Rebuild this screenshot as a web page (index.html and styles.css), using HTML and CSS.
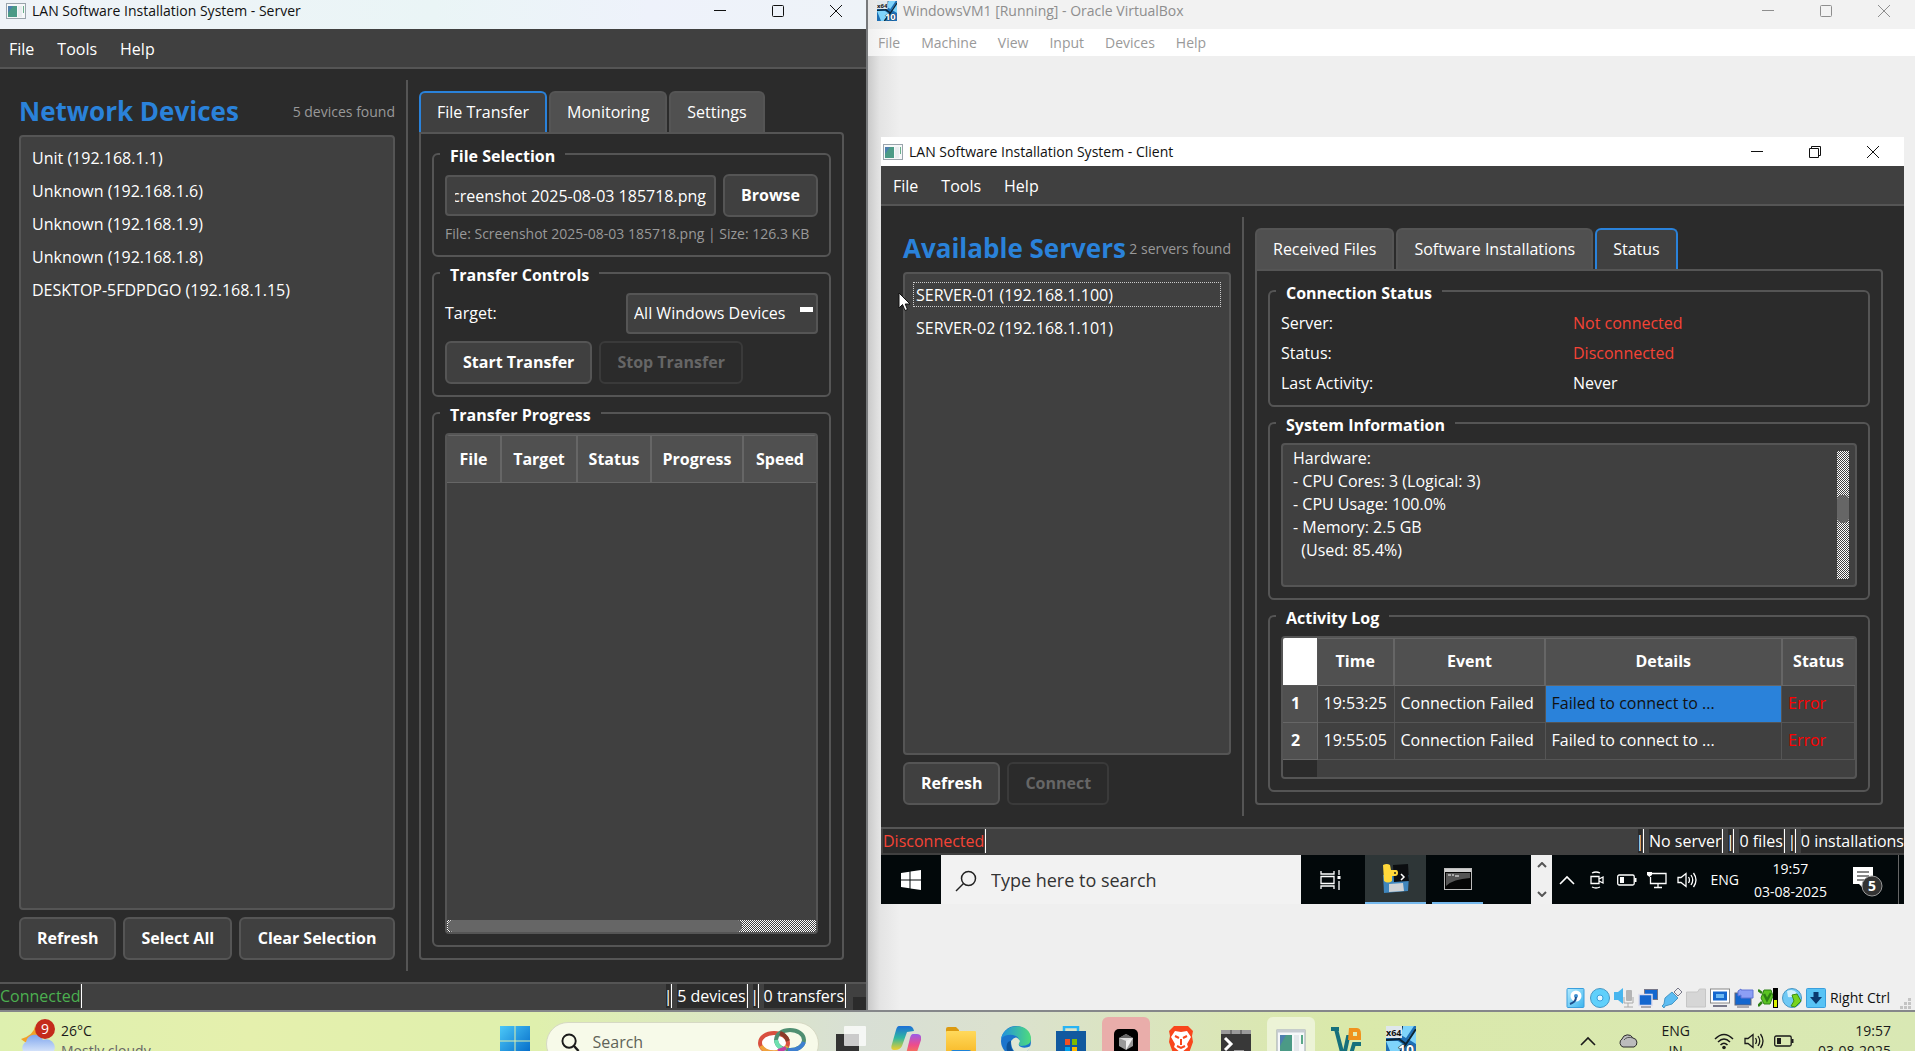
FILE: index.html
```html
<!DOCTYPE html>
<html lang="en">
<head>
<meta charset="utf-8">
<title>LAN Software Installation System</title>
<link rel="stylesheet" href="styles.css">
</head>
<body>
<svg class="defs" aria-hidden="true">
  <defs>
    <linearGradient id="gWin" x1="0" y1="0" x2="1" y2="1"><stop offset="0" stop-color="#4cc8f8"/><stop offset="1" stop-color="#0067c6"/></linearGradient>
    <linearGradient id="gCloud" x1="0" y1="0" x2="0" y2="1"><stop offset="0" stop-color="#7fa6ee"/><stop offset="1" stop-color="#e6effc"/></linearGradient>
    <linearGradient id="gEdge" x1="0" y1="0" x2="1" y2="0"><stop offset="0" stop-color="#1f8fe0"/><stop offset="1" stop-color="#4fdc7c"/></linearGradient>
    <linearGradient id="gFold" x1="0" y1="0" x2="0" y2="1"><stop offset="0" stop-color="#ffd95c"/><stop offset="1" stop-color="#f7b521"/></linearGradient>
    <linearGradient id="gCopA" x1="0" y1="0" x2="0" y2="1"><stop offset="0" stop-color="#1d6fd8"/><stop offset=".5" stop-color="#2fb7a0"/><stop offset="1" stop-color="#f2cf2c"/></linearGradient>
    <linearGradient id="gCopB" x1="0" y1="0" x2="0" y2="1"><stop offset="0" stop-color="#9a5be8"/><stop offset=".5" stop-color="#ee4c8b"/><stop offset="1" stop-color="#f98a3c"/></linearGradient>
    <linearGradient id="gBlue" x1="0" y1="0" x2="1" y2="1"><stop offset="0" stop-color="#b6ecff"/><stop offset="1" stop-color="#3ab4ee"/></linearGradient>
    <symbol id="app" viewBox="0 0 20 16"><rect x=".5" y=".5" width="19" height="15" fill="#f6f8f9" stroke="#9aa4ac"/><rect x="2" y="3" width="9" height="11" fill="#4b9a86"/><path d="M2 3h5l-5 7z" fill="#4d7fae"/><rect x="12" y="3" width="4" height="11" fill="#e9edf0"/><rect x="17" y="3" width="1" height="7" fill="#6ab08c"/></symbol>
    <symbol id="min" viewBox="0 0 14 14"><path d="M1 6.500h12" stroke="currentColor"/></symbol>
    <symbol id="max" viewBox="0 0 14 14"><rect x="1.500" y="1.500" width="11" height="11" rx="1" fill="none" stroke="currentColor"/></symbol>
    <symbol id="restore" viewBox="0 0 14 14"><path d="M1.500 3.500h9v9h-9zM3.500 3.500v-2h9v9h-2" fill="none" stroke="currentColor"/></symbol>
    <symbol id="close" viewBox="0 0 14 14"><path d="M1 1l12 12M13 1L1 13" stroke="currentColor"/></symbol>
    <symbol id="vm" viewBox="0 0 30 30"><rect width="30" height="30" fill="#1e6fb4"/><path d="M17 0h11L20 12 15 9zM22 13l8-11v16zM0 15h12l6 4-6 11H6z" fill="#7fd4fb"/><path d="M16 0l-3 13L0 14M13 13l7 5 10-15M20 18l-9 12" stroke="#0c2434" stroke-width="2" fill="none"/><rect width="16" height="12" fill="#dfe7ec"/><text x="0" y="10" font-size="9" font-weight="700" font-family="Open Sans, sans-serif" fill="#111">x64</text><text x="12" y="29" font-size="14" font-weight="700" font-family="Open Sans, sans-serif" fill="#fff" stroke="#123" stroke-width="1" paint-order="stroke">10</text></symbol>
    <symbol id="speaker" viewBox="0 0 20 20"><path d="M1 7.500h3l5-4v13l-5-4H1zM11.500 7q2 3 0 6M14 5q3.500 5 0 10M16.500 3q5 7 0 14" fill="none" stroke="currentColor" stroke-width="1.300"/></symbol>
    <symbol id="battery" viewBox="0 0 20 20"><rect x=".7" y="5" width="16.500" height="10" rx="1.500" fill="none" stroke="currentColor" stroke-width="1.300"/><path d="M18.500 8v4" stroke="currentColor" stroke-width="2"/><rect x="3" y="7" width="4" height="6" fill="currentColor"/></symbol>
    <symbol id="caret" viewBox="0 0 20 20"><path d="M3 14l7-7 7 7" fill="none" stroke="currentColor" stroke-width="1.600"/></symbol>
    <symbol id="lens" viewBox="0 0 20 20"><circle cx="8.500" cy="8.500" r="7" fill="none" stroke="currentColor" stroke-width="2"/><path d="M13.500 13.500l5 5.500" stroke="currentColor" stroke-width="2.500"/></symbol>
  </defs>
</svg>

<main class="desktop">
  <section class="window server" aria-label="Server">
    <header class="titlebar titlebar-server">
      <svg class="app-icon"><use href="#app"/></svg>
      <span class="window-title">LAN Software Installation System - Server</span>
      <span class="controls"><button aria-label="Minimize"><svg><use href="#min"/></svg></button><button aria-label="Maximize"><svg><use href="#max"/></svg></button><button aria-label="Close"><svg><use href="#close"/></svg></button></span>
    </header>
    <nav class="menubar"><button>File</button><button>Tools</button><button>Help</button></nav>
    <div class="body body-server">
      <div class="side side-server">
        <div class="side-head"><h1>Network Devices</h1><span class="note">5 devices found</span></div>
        <ul class="list">
          <li>Unit (192.168.1.1)</li>
          <li>Unknown (192.168.1.6)</li>
          <li>Unknown (192.168.1.9)</li>
          <li>Unknown (192.168.1.8)</li>
          <li>DESKTOP-5FDPDGO (192.168.1.15)</li>
        </ul>
        <div class="actions"><button class="btn">Refresh</button><button class="btn">Select All</button><button class="btn btn-grow">Clear Selection</button></div>
      </div>
      <div class="splitter"></div>
      <div class="content">
        <div class="tabs" role="tablist"><button class="tab tab-on" role="tab">File Transfer</button><button class="tab" role="tab">Monitoring</button><button class="tab" role="tab">Settings</button></div>
        <div class="pane">
          <fieldset class="group">
            <legend>File Selection</legend>
            <div class="group-body">
              <div class="row"><input class="field path" aria-label="File path" dir="rtl" value="Screenshot 2025-08-03 185718.png"><button class="btn">Browse</button></div>
              <p class="note info">File: Screenshot 2025-08-03 185718.png | Size: 126.3 KB</p>
            </div>
          </fieldset>
          <fieldset class="group">
            <legend>Transfer Controls</legend>
            <div class="group-body">
              <div class="row spread"><label for="target">Target:</label><span class="combo"><select class="field" id="target"><option>All Windows Devices</option></select></span></div>
              <div class="row"><button class="btn">Start Transfer</button><button class="btn" disabled>Stop Transfer</button></div>
            </div>
          </fieldset>
          <fieldset class="group group-grow">
            <legend>Transfer Progress</legend>
            <div class="group-body">
              <div class="table-box">
                <table class="grid">
                  <colgroup><col class="w-file"><col class="w-target"><col class="w-status"><col><col class="w-speed"></colgroup>
                  <thead><tr><th>File</th><th>Target</th><th>Status</th><th>Progress</th><th>Speed</th></tr></thead>
                </table>
                <div class="hscroll"><div class="hthumb"></div></div>
              </div>
            </div>
          </fieldset>
        </div>
      </div>
    </div>
    <footer class="statusbar">
      <span class="cell ok">Connected</span>
      <span class="cell bar push">|</span><span class="cell">5 devices</span><span class="cell bar">|</span><span class="cell">0 transfers</span>
      <span class="grip"></span>
    </footer>
  </section>

  <section class="window vbox" aria-label="VirtualBox">
    <header class="titlebar titlebar-vbox">
      <svg class="vm-icon"><use href="#vm"/></svg>
      <span class="window-title">WindowsVM1 [Running] - Oracle VirtualBox</span>
      <span class="controls"><button aria-label="Minimize"><svg><use href="#min"/></svg></button><button aria-label="Maximize"><svg><use href="#max"/></svg></button><button aria-label="Close"><svg><use href="#close"/></svg></button></span>
    </header>
    <nav class="vm-menu"><button>File</button><button>Machine</button><button>View</button><button>Input</button><button>Devices</button><button>Help</button></nav>
    <div class="screen">
      <div class="guest">
        <header class="titlebar titlebar-client">
          <svg class="app-icon"><use href="#app"/></svg>
          <span class="window-title">LAN Software Installation System - Client</span>
          <span class="controls"><button aria-label="Minimize"><svg><use href="#min"/></svg></button><button aria-label="Restore"><svg><use href="#restore"/></svg></button><button aria-label="Close"><svg><use href="#close"/></svg></button></span>
        </header>
        <nav class="menubar menubar-client"><button>File</button><button>Tools</button><button>Help</button></nav>
        <div class="body body-client">
          <div class="side side-client">
            <div class="side-head"><h1>Available Servers</h1><span class="note">2 servers found</span></div>
            <ul class="list">
              <li class="focused">SERVER-01 (192.168.1.100)</li>
              <li>SERVER-02 (192.168.1.101)</li>
            </ul>
            <div class="actions"><button class="btn">Refresh</button><button class="btn" disabled>Connect</button></div>
            <svg class="cursor" viewBox="0 0 13 20"><path d="M1 1v15l3.500-3.500L7 18.500l2.500-1L7.200 12H12z" fill="#fff" stroke="#111"/></svg>
          </div>
          <div class="splitter"></div>
          <div class="content content-client">
            <div class="tabs" role="tablist"><button class="tab" role="tab">Received Files</button><button class="tab" role="tab">Software Installations</button><button class="tab tab-on" role="tab">Status</button></div>
            <div class="pane">
              <fieldset class="group">
                <legend>Connection Status</legend>
                <dl class="group-body facts">
                  <dt>Server:</dt><dd class="bad">Not connected</dd>
                  <dt>Status:</dt><dd class="bad">Disconnected</dd>
                  <dt>Last Activity:</dt><dd>Never</dd>
                </dl>
              </fieldset>
              <fieldset class="group group-grow">
                <legend>System Information</legend>
                <div class="group-body">
                  <div class="info-box">
                    <textarea readonly aria-label="System Information">Hardware:
- CPU Cores: 3 (Logical: 3)
- CPU Usage: 100.0%
- Memory: 2.5 GB
  (Used: 85.4%)</textarea>
                    <div class="vscroll"><div class="vthumb"></div></div>
                  </div>
                </div>
              </fieldset>
              <fieldset class="group group-grow">
                <legend>Activity Log</legend>
                <div class="group-body">
                  <div class="table-box">
                    <table class="grid log">
                      <colgroup><col class="w-num"><col class="w-time"><col class="w-event"><col><col class="w-speed"></colgroup>
                      <thead><tr><td class="corner"></td><th>Time</th><th>Event</th><th>Details</th><th>Status</th></tr></thead>
                      <tbody>
                        <tr><th>1</th><td>19:53:25</td><td>Connection Failed</td><td class="selected">Failed to connect to ...</td><td class="error">Error</td></tr>
                        <tr><th>2</th><td>19:55:05</td><td>Connection Failed</td><td>Failed to connect to ...</td><td class="error">Error</td></tr>
                      </tbody>
                    </table>
                    <div class="num-rest"></div>
                  </div>
                </div>
              </fieldset>
            </div>
          </div>
        </div>
        <footer class="statusbar statusbar-client">
          <span class="cell lost">Disconnected</span>
          <span class="cell bar push">|</span><span class="cell">No server</span><span class="cell bar">|</span><span class="cell">0 files</span><span class="cell bar">|</span><span class="cell cell-last">0 installations</span>
        </footer>
        <div class="guest-bar">
          <button class="g-start" aria-label="Start"><svg viewBox="0 0 20 20"><path d="M0 3l8.500-1.200V9.500H0zM9.500 1.600L20 0v9.500H9.500zM0 10.500h8.500v7.700L0 17zM9.500 10.500H20V20L9.500 18.400z" fill="#fff"/></svg></button>
          <label class="g-search"><svg viewBox="0 0 22 22"><circle cx="13.500" cy="8.500" r="7" fill="none" stroke="#222" stroke-width="1.500"/><path d="M8.500 13.500L1 21" stroke="#222" stroke-width="1.500"/></svg><input aria-label="Search" placeholder="Type here to search"></label>
          <button class="g-view" aria-label="Task view"><svg viewBox="0 0 22 20"><path d="M1 1v3h13V1M1 19v-3h13v3M1 6.500h13v7H1zM19 0v5M19 11v9" fill="none" stroke="#fff" stroke-width="1.300"/><rect x="17.500" y="6" width="3" height="3" fill="#fff"/></svg></button>
          <button class="g-task g-task-on" aria-label="Python"><svg viewBox="0 0 28 30"><path d="M1 11h26l-1 16-24 2z" fill="#3f86bd"/><path d="M11 1l15-1 1 17-15 1z" fill="#0b0d10"/><path d="M7 20l14-1 1 8-15 1z" fill="#cfd2d4"/><path d="M1 1q4-2 7 0l1 5h5q2 0 2 3t-3 3h-3v5q-4 3-8 0z" fill="#ffd83a"/><circle cx="13" cy="9" r="1" fill="#222"/><path d="M19 10l3 3-3 3" stroke="#fff" stroke-width="1.500" fill="none"/></svg></button>
          <button class="g-task g-task-under" aria-label="Command Prompt"><svg viewBox="0 0 28 30"><rect x=".5" y="4.500" width="27" height="21" fill="#050505" stroke="#bbb"/><path d="M1 5h26v3H1z" fill="#d0d0d0"/><path d="M2 9h24v5Q9 15 2 22z" fill="#555"/><path d="M4 11h3m1 0h2m1 1h4" stroke="#fff"/></svg></button>
          <span class="g-scroll"><svg viewBox="0 0 10 6"><path d="M1 5l4-4 4 4" fill="none" stroke="#555" stroke-width="2"/></svg><svg viewBox="0 0 10 6"><path d="M1 1l4 4 4-4" fill="none" stroke="#555" stroke-width="2"/></svg></span>
          <div class="g-tray">
            <svg><use href="#caret"/></svg>
            <svg viewBox="0 0 20 20"><path d="M4 6.500h8v7H4zM12 9l4-2v6l-4-2M5 3q4-2 8 0M5 17q4 2 8 0" fill="none" stroke="#fff" stroke-width="1.300"/></svg>
            <svg><use href="#battery"/></svg>
            <svg viewBox="0 0 20 20"><path d="M5 3.500h14v10H3.500V7M11 14v3M7 17.500h8" fill="none" stroke="#fff" stroke-width="1.300"/><path d="M0 2h5v3L2.500 7 0 5z" fill="#fff"/></svg>
            <svg><use href="#speaker"/></svg>
            <span class="g-lang">ENG</span>
            <span class="g-clock"><span>19:57</span><span>03-08-2025</span></span>
            <svg class="g-note" viewBox="0 0 30 30"><path d="M0 0h20v17H10v4l-4-4H0z" fill="#fff"/><path d="M4 5h12M4 9h12M4 13h9" stroke="#111"/><circle cx="19" cy="19" r="10" fill="#333" stroke="#999"/><text x="19" y="24" text-anchor="middle" font-size="14" font-weight="700" font-family="Open Sans, sans-serif" fill="#fff">5</text></svg>
            <span class="g-edge"></span>
          </div>
        </div>
      </div>
    </div>
    <footer class="vm-status">
      <svg viewBox="0 0 20 20"><rect x="1" y=".5" width="17" height="19" rx="1" fill="url(#gBlue)" stroke="#3a9fdd"/><circle cx="10" cy="8" r="5.500" fill="#fff"/><circle cx="10" cy="8" r="2" fill="#3f8fd0"/><path d="M10 9q0 5-6 7" stroke="#1d4f8c" stroke-width="2" fill="none"/></svg>
      <svg viewBox="0 0 20 20"><circle cx="10" cy="10" r="9.500" fill="#5fd0fb" stroke="#4797c4"/><circle cx="10" cy="10" r="3" fill="#e6f8ff" stroke="#3a9fdd"/></svg>
      <svg viewBox="0 0 20 20"><path d="M0 4h4l5-4v16l-5-4H0z" fill="#49b6ee"/><rect x="12" y="2" width="6" height="11" rx="1" fill="#b5b5b5"/><path d="M10 9v6h9V9M14 15v4M10 19h9" stroke="#aaa" fill="none"/></svg>
      <svg viewBox="0 0 20 20"><rect x="6.500" y="1.500" width="13" height="10" fill="#1467cf" stroke="#778"/><rect x="1" y="6.500" width="13" height="11" fill="#1467cf" stroke="#dde" stroke-width="1.500"/><path d="M3 19h10" stroke="#667"/></svg>
      <svg viewBox="0 0 20 20"><path d="M12 4l4-4 4 4-4 4z" fill="#eee" stroke="#778"/><path d="M10 4l6 6-6 6-7 2-1 2-2-2 2-2 1-6z" fill="#5cbdf3" stroke="#4797c4"/></svg>
      <svg viewBox="0 0 20 20"><path d="M.5 4h11l2-3h6v18H.5z" fill="#d6d6d6" stroke="#c6c6c6"/></svg>
      <svg viewBox="0 0 20 20"><rect x=".5" y="1" width="19" height="14" fill="#fff" stroke="#888"/><rect x="3" y="3.500" width="14" height="9" fill="#1467cf"/><rect x="6" y="6" width="8" height="4" fill="#6db8f2"/><path d="M3 18h14" stroke="#778" stroke-width="2"/></svg>
      <svg viewBox="0 0 20 20"><rect x="1" y="5" width="16" height="12" fill="#1467cf" stroke="#667"/><path d="M3 19h12" stroke="#667"/><path d="M4 3l3-2v1h12v8H7v-3L4 8z" fill="#8c9ff5" stroke="#6175d6"/></svg>
      <svg viewBox="0 0 20 20"><path d="M6 2h7l2 6-3 8H6L3 10z" fill="#5bc423" stroke="#2d8114"/><path d="M0 2l4 3M0 18l4-4M6 6l3 6 4-7" stroke="#2d8114" stroke-width="2.500" fill="none"/><rect x="15" width="5" height="20" fill="#000"/><rect x="16" y="12" width="3" height="7" fill="#d8f000"/></svg>
      <svg viewBox="0 0 20 20"><circle cx="10" cy="10" r="9.500" fill="#6fc9f5" stroke="#4797c4"/><path d="M5 3q6-3 10 2-5 5-9 4z" fill="#d4f1fd"/><path d="M10 7l5-1 4 7-6 6-4-1 3-5z" fill="#77d41f" stroke="#3d8f14"/></svg>
      <svg viewBox="0 0 20 20"><rect x=".5" y=".5" width="19" height="19" rx="1" fill="#58c3f5" stroke="#3a9fdd"/><path d="M7.500 4h5v5H16l-6 7-6-7h3.500z" fill="#0b3a70"/></svg>
      <span>Right Ctrl</span>
      <svg class="resize" viewBox="0 0 12 12"><path d="M8 0h3v3H8zM4 4h3v3H4zM8 4h3v3H8zM0 8h3v3H0zM4 8h3v3H4zM8 8h3v3H8z" fill="#c4c4c4"/></svg>
    </footer>
  </section>
</main>

<footer class="taskbar">
  <div class="weather">
    <svg viewBox="0 0 34 36"><path d="M14 7q-1 9-14 13 8 8 20 1z" fill="#f2a229"/><path d="M7 36a7 7 0 0 1-2-13 9 9 0 0 1 17-2 8 8 0 0 1 7 15z" fill="url(#gCloud)"/><circle cx="24" cy="10" r="10" fill="#c42b1c"/><text x="24" y="15" text-anchor="middle" font-size="14" font-family="Open Sans, sans-serif" fill="#fff">9</text></svg>
    <p><span>26°C</span><span class="dim">Mostly cloudy</span></p>
  </div>
  <div class="apps">
    <button aria-label="Start"><svg viewBox="0 0 30 30"><path d="M0 0h14.500v14.500H0zM15.500 0H30v14.500H15.500zM0 15.500h14.500V30H0zM15.500 15.500H30V30H15.500z" fill="url(#gWin)"/></svg></button>
    <label class="search"><svg class="search-lens"><use href="#lens"/></svg><input aria-label="Search" placeholder="Search"><svg class="rings" viewBox="0 0 48 30"><ellipse cx="16" cy="16" rx="14" ry="10" fill="#fff" stroke="#d9503f" stroke-width="4"/><path d="M3 19a14 10 0 0 0 26 0" fill="none" stroke="#f0a23c" stroke-width="4"/><ellipse cx="32" cy="13" rx="14" ry="10" fill="none" stroke="#4f8f72" stroke-width="4"/><path d="M18 13q1 8 10 10" fill="none" stroke="#6fe0b0" stroke-width="4"/><path d="M30 23q12 1 16-8" fill="none" stroke="#3d7fd0" stroke-width="4"/><path d="M20 24l8-3" stroke="#c23fa0" stroke-width="4"/><path d="M22 6q6 2 8 8" fill="none" stroke="#8a3a2a" stroke-width="4"/></svg></label>
    <button aria-label="Task view"><svg viewBox="0 0 30 30"><rect y="8" width="23" height="23" fill="#333"/><rect x="8" width="22" height="20" rx="1" fill="#fff" fill-opacity=".75"/></svg></button>
    <button aria-label="Copilot"><svg viewBox="0 0 30 30"><path d="M8 0h10q4 0 5 5l-7 1-5 14q-2 4-7 4H3q-4 0-2-6L5 4q1-4 3-4z" fill="url(#gCopA)"/><path d="M22 8h4q5 0 4 6l-4 12q-1 4-5 4H11q4-1 5-6l3-12q1-4 3-4z" fill="url(#gCopB)"/></svg></button>
    <button aria-label="File Explorer"><svg viewBox="0 0 30 30"><path d="M0 3q0-2 2-2h8l3 3v6H0z" fill="#dc9a10"/><rect y="5" width="30" height="26" rx="1" fill="url(#gFold)"/><path d="M5 30v-4q0-2 2-2h16q2 0 2 2v4z" fill="#1c82d8"/></svg></button>
    <button aria-label="Edge"><svg viewBox="0 0 30 30"><circle cx="15" cy="15" r="15" fill="#1b74cc"/><path d="M0 13C3-4 30-4 30 13q0 7-10 7-4-1-2-5 0-5-6-6Q4 8 0 13z" fill="url(#gEdge)"/><path d="M10 15q5-7 9 0-3 5 1 6 4 2 10-1-7 12-15 7-5-4-5-12z" fill="#dfe7d4"/><path d="M10 15q-2 9 8 15-15 0-12-12 1-3 4-3z" fill="#0d5298"/></svg></button>
    <button aria-label="Microsoft Store"><svg viewBox="0 0 30 30"><path d="M8 5V1h14v4" fill="none" stroke="#28b4f4" stroke-width="2.500"/><path d="M0 5h30v25H0z" fill="#11599f"/><path d="M9 13h5v6H9z" fill="#f25022"/><path d="M16 13h5v6h-5z" fill="#7fba00"/><path d="M9 21h5v6H9z" fill="#00a4ef"/><path d="M16 21h5v6h-5z" fill="#ffb900"/></svg></button>
    <button class="alert" aria-label="Cursor"><svg viewBox="0 0 30 30"><rect x="3" y="3" width="24" height="28" rx="5" fill="#000"/><path d="M15 8l7 4v8l-7 4-7-4v-8z" fill="#999"/><path d="M15 14l7-2-7 12z" fill="#eee"/><path d="M8 12h14l-7 3z" fill="#ddd"/><path d="M15 8l7 4H8z" fill="#666"/></svg></button>
    <button aria-label="Brave"><svg viewBox="0 0 30 30"><path d="M8 0h14l5 5-1 5 1 6-4 11-8 5-8-5-4-11 1-6-1-5z" fill="#f9461c"/><path d="M9 5l6 1 6-1 4 6-4 7 1 3-7 6-7-6 1-3-4-7z" fill="#fff"/><path d="M9 10l4 2M21 10l-4 2M15 13v6M11 20l4 2 4-2" stroke="#f9461c" stroke-width="2" fill="none"/></svg></button>
    <button aria-label="Terminal"><svg viewBox="0 0 30 30"><rect y="4" width="30" height="28" fill="#383838"/><path d="M0 4h30v4H0z" fill="#9a9a9a"/><path d="M10 4v4M20 4v4" stroke="#444"/><path d="M4 12l6 6-6 6" stroke="#fff" stroke-width="3" fill="none"/><path d="M13 26h10" stroke="#fff" stroke-width="3"/></svg></button>
    <button class="active" aria-label="LAN Software Installation System"><svg viewBox="0 0 30 30"><rect x="1" y="4" width="28" height="30" fill="#f6f8f9" stroke="#9aa4ac"/><path d="M1 5h28" stroke="#c6ccd2" stroke-width="3"/><rect x="4" y="9" width="12" height="19" fill="#4b9a86"/><path d="M4 9h6L4 20z" fill="#4d7fae"/><rect x="18" y="9" width="5" height="19" fill="#e4e8eb"/><path d="M26 9v9" stroke="#5aa888" stroke-width="2"/></svg></button>
    <button aria-label="VirtualBox Manager"><svg viewBox="0 0 30 30"><path d="M0 3h8M5 3l7 27M23 11h-6l-4 19" fill="none" stroke="#15707c" stroke-width="4"/><path d="M18 2h8q4 0 4 6v6H17z" fill="#f0921e"/><path d="M22 6h4v4h-4z" fill="#e2ebb4"/><path d="M30 18h-7l-3 10h10" fill="none" stroke="#15707c" stroke-width="4"/></svg></button>
    <button aria-label="WindowsVM1"><svg><use href="#vm"/></svg></button>
  </div>
  <div class="tray">
    <svg><use href="#caret"/></svg>
    <svg class="cloud" viewBox="0 0 20 20"><path d="M5 16a4.500 4.500 0 0 1-1-8 6 6 0 0 1 11-1 4.700 4.700 0 0 1 1 9z" fill="#bcbcbc" stroke="#2c2c2c"/><path d="M6 9q3-4 9-2" stroke="#555" fill="none"/></svg>
    <span class="stack lang"><span>ENG</span><span>IN</span></span>
    <svg class="wifi" viewBox="0 0 20 20"><path d="M1 8q9-9 18 0M4 11q6-6 12 0M6.500 14q3.500-3.500 7 0" fill="none" stroke="#1a1a1a" stroke-width="1.500"/><circle cx="10" cy="16.500" r="1.800" fill="#1a1a1a"/></svg>
    <svg><use href="#speaker"/></svg>
    <svg><use href="#battery"/></svg>
    <span class="stack clock"><span>19:57</span><span>03-08-2025</span></span>
  </div>
</footer>
</body>
</html>
```
FILE: styles.css
```css
* { box-sizing: border-box; }

body {
  margin: 0;
  height: 100vh;
  display: grid;
  grid-template-rows: minmax(0, 1fr) 39px;
  overflow: hidden;
  background: #efefef;
  color: #fff;
  font: 16px/23px "Open Sans", "Noto Sans", sans-serif;
}

button, input, select, textarea {
  margin: 0;
  padding: 0;
  border: 0;
  background: none;
  color: inherit;
  font: inherit;
}

svg { display: block; flex: none; }
.defs { position: absolute; width: 0; height: 0; }
p, h1, ul, dl, dd { margin: 0; padding: 0; }
ul { list-style: none; }

/* Windows side by side */
.desktop {
  display: grid;
  grid-template-columns: minmax(0, 868fr) minmax(0, 1047fr);
  border-bottom: 2px solid #85878a;
}
.window { display: flex; flex-direction: column; min-width: 0; min-height: 0; }
.server { border-right: 2px solid #77797b; background: #2b2b2b; }
.vbox {
  background: linear-gradient(90deg, #cacaca, #e4e4e4 12px, #efefef 32px);
  color: #999;
  font-size: 14px;
}

/* Title bars */
.titlebar { display: flex; align-items: center; flex: none; height: 29px; color: #111; font-size: 14px; }
.titlebar-server { padding: 0 1px 8px 6px; background: linear-gradient(90deg, #eff3f8, #eaf5f6 50%, #eef2fb 75%, #eef3f8); }
.titlebar-vbox { padding: 0 2px 8px 9px; background: linear-gradient(90deg, #e6e6e6, #f2f2f2 32px); color: #8e8e8e; }
.titlebar-client { padding: 0 2px 0 2px; background: #fff; }
.window-title { margin-left: 6px; white-space: nowrap; }
.app-icon { width: 20px; height: 16px; }
.vm-icon { width: 20px; height: 20px; }
.controls { display: flex; margin-left: auto; }
.controls button { width: 58px; display: grid; place-items: center; }
.controls svg { width: 14px; height: 14px; }

/* Menu bars */
.menubar { display: flex; flex: none; gap: 23px; height: 40px; padding: 2px 9px 0; background: #404040; border-bottom: 2px solid #555; }
.menubar-client { padding: 2px 12px 0; }
.vm-menu { display: flex; flex: none; gap: 21px; height: 27px; padding: 0 10px; background: linear-gradient(90deg, #f0f0f0, #fff 32px); }

/* Application body */
.body { flex: 1; min-height: 0; display: grid; padding: 11px 0; background: #2b2b2b; }
.body-server { grid-template-columns: minmax(0, 406fr) 2px minmax(0, 458fr); }
.body-client { grid-template-columns: minmax(0, 361fr) 2px minmax(0, 660fr); }
.splitter { background: #555; }
.side { display: flex; flex-direction: column; min-height: 0; padding: 11px 11px 11px 19px; }
.side-client { position: relative; padding-left: 22px; }
.side-head { display: flex; align-items: center; justify-content: space-between; height: 40px; margin-bottom: 4px; white-space: nowrap; }
h1 { color: #2a82da; font-size: 26px; line-height: 40px; }
.note { color: #999; font-size: 14px; }
.list { flex: 1; min-height: 0; padding: 8px; border: 2px solid #555; border-radius: 4px; background: #404040; }
.list li { height: 25px; margin-bottom: 8px; padding: 0 3px; line-height: 27px; }
.list .focused { outline: 1px dotted #ccc; outline-offset: -1px; }
.actions, .row { display: flex; gap: 7px; }
.actions { margin-top: 7px; }
.spread { align-items: center; justify-content: space-between; }
.btn { height: 43px; padding: 0 16px; border: 2px solid #555; border-radius: 6px; background: #404040; font-weight: 700; white-space: nowrap; }
.btn-grow { flex: 1; }
.btn:disabled { border-color: #3a3a3a; background: #2b2b2b; color: #666; }
.cursor { position: absolute; left: 17px; top: 75px; width: 13px; height: 20px; }

/* Tabs */
.content { display: flex; flex-direction: column; min-height: 0; padding: 11px 22px 11px 11px; }
.content-client { padding-right: 21px; }
.tabs { display: flex; gap: 2px; }
.tab { height: 41px; padding: 0 16px; border: 2px solid #555; border-bottom: 0; border-radius: 6px 6px 0 0; background: #505050; white-space: nowrap; }
.tab-on { border-color: #2a82da; background: #404040; }
.pane { flex: 1; min-height: 0; display: flex; flex-direction: column; gap: 3px; padding: 7px 11px 11px; border: 2px solid #555; border-radius: 0 4px 4px 4px; }

/* Group boxes */
.group { display: flex; flex-direction: column; min-width: 0; min-height: 0; margin: 0; padding: 0; border: 2px solid #555; border-radius: 6px; }
.group-grow { flex: 1 1 0; }
legend { height: 26px; margin-left: 6px; padding: 4px 10px 0; line-height: 22px; font-weight: 700; }
.group-body { flex: 1; min-height: 0; display: flex; flex-direction: column; gap: 7px; padding: 7px 11px 11px; }
.row .field { align-self: center; }
.field { height: 41px; padding: 0 8px; border: 2px solid #555; border-radius: 4px; background: #404040; }
.path { flex: 1; min-width: 0; }
.info { line-height: 20px; white-space: nowrap; }
.combo { position: relative; }
.combo .field { display: block; width: 192px; padding: 0 6px; appearance: none; }
.combo::after { content: ""; position: absolute; right: 5px; top: 14px; width: 13px; height: 5px; background: #fff; }
.facts { display: grid; grid-template-columns: 292fr 284fr; gap: 7px 0; line-height: 25px; grid-auto-rows: 23px; }
.bad { color: #f44336; }

/* Tables */
.table-box { flex: 1; min-height: 0; display: flex; flex-direction: column; border: 2px solid #555; border-radius: 4px; background: #404040; overflow: hidden; }
.grid { width: 100%; table-layout: fixed; border-collapse: collapse; white-space: nowrap; }
.grid th { height: 47px; padding: 0; border: 1px solid #666; border-left: 0; border-right-width: 2px; background: #505050; }
.grid th:last-child { border-right: 0; }
.grid td { padding: 0 0 0 6px; border-right: 1px solid #555; border-bottom: 1px solid #555; }
.grid.log tbody th { height: 37px; padding-left: 8px; border-right-width: 1px; border-right-style: solid; text-align: left; }
.log .corner { background: #fff; }
.log .selected { background: #2a82da; color: #111; }
.log .error { color: #f00; }
.num-rest { width: 34px; flex: 1; background: #2b2b2b; }
.w-file { width: 54px; }
.w-target { width: 76px; }
.w-status { width: 74px; }
.w-speed { width: 73px; }
.w-num { width: 34px; }
.w-time { width: 77px; }
.w-event { width: 151px; }

/* Scroll bars with a dithered track */
.hscroll, .vscroll { background: repeating-conic-gradient(#fff 0 25%, #404040 0 50%) 0 0 / 2px 2px; }
.hscroll { height: 12px; margin-top: auto; padding-left: 1px; }
.hthumb { width: 80%; height: 12px; border-radius: 5px; background: #666; }
.info-box { flex: 1; min-height: 0; display: flex; padding: 6px; border: 2px solid #555; border-radius: 4px; background: #404040; }
.info-box textarea { flex: 1; resize: none; overflow: hidden; padding: 0 4px; outline: 0; margin-top: -4px; }
.vscroll { width: 12px; }
.vthumb { height: 22%; margin-top: 44px; border-radius: 5px; background: #666; }

/* Status bars */
.statusbar { display: flex; flex: none; height: 28px; border-top: 2px solid #555; background: #404040; white-space: nowrap; overflow: hidden; line-height: 25px; color: #fff; }
.statusbar-client { padding-left: 2px; }
.cell { height: 24px; margin-right: 5px; border-right: 1px solid #fff; background: #2b2b2b; background-clip: content-box; padding-right: 1px; }
.bar { display: flex; justify-content: center; width: 6px; }
.push { margin-left: auto; }
.cell-last { margin-right: 0; border: 0; padding: 0; }
.ok { color: #4caf50; }
.lost { color: #f44336; }
.grip { align-self: flex-end; width: 13px; height: 13px; margin-left: 2px; background: #2b2b2b; }

/* Virtual machine screen */
.screen { flex: 1; min-height: 0; padding: 81px 11px 81px 13px; }
.guest { height: 100%; display: flex; flex-direction: column; color: #fff; font-size: 16px; }
.guest-bar { display: flex; flex: none; height: 49px; background: #02080a; }
.g-start { width: 60px; display: grid; place-items: center; }
.g-start svg { width: 20px; height: 20px; }
.g-search { width: 360px; display: flex; align-items: center; gap: 14px; padding: 2px 14px 0; background: #f2f2f2; }
.g-search svg { width: 22px; height: 22px; }
.g-search input { flex: 1; min-width: 0; color: #222; font-size: 18px; }
.g-search input::placeholder { color: #333; opacity: 1; }
.g-view { width: 64px; padding-right: 4px; display: grid; place-items: center; }
.g-view svg { width: 22px; height: 20px; }
.g-task { width: 61px; display: grid; place-items: center; border-bottom: 2px solid transparent; }
.g-task svg { width: 28px; height: 30px; }
.g-task-on { background: #2e3637; border-bottom-color: #76b9ed; }
.g-task-under { width: 51px; margin-left: 6px; border-bottom-color: #76b9ed; }
.g-scroll { width: 21px; margin-left: auto; display: flex; flex-direction: column; justify-content: space-between; align-items: center; padding: 7px 0; background: #f0f0f0; }
.g-scroll svg { width: 10px; height: 6px; }
.g-tray { display: flex; align-items: center; gap: 10px; padding: 0 5px; }
.g-tray svg { width: 20px; height: 20px; }
.g-lang { margin-left: 3px; font-size: 14px; }
.g-clock { display: flex; flex-direction: column; align-items: center; margin-left: 5px; font-size: 14px; line-height: 23px; }
.g-tray .g-note { width: 30px; height: 30px; margin: 4px 0 0 16px; }
.g-edge { width: 1px; height: 49px; background: #666; margin-left: 5px; }

.vm-status { display: flex; flex: none; align-items: center; justify-content: flex-end; gap: 4px; height: 25px; padding-right: 3px; color: #111; font-size: 14px; }
.vm-status svg { width: 20px; height: 20px; }
.vm-status .resize { width: 12px; height: 12px; align-self: flex-end; margin-left: 6px; }

/* Host taskbar, running off the lower edge */
.taskbar {
  display: grid;
  grid-template-columns: 1fr auto 1fr;
  align-items: start;
  overflow: hidden;
  background: linear-gradient(90deg, #def0af, #e5f0ad 13%, #dff0ad 28%, #d8dfd5 45%, #dbe1cf 52%, #dae9aa 70%, #d9e8b4);
  color: #1a1a1a;
  font-size: 14px;
  line-height: 20px;
}
.weather { display: flex; gap: 6px; padding: 7px 0 0 21px; }
.weather svg { width: 34px; height: 36px; }
.weather span, .stack span { display: block; }
.weather p { margin-top: 2px; }
.dim { color: #666; }
.apps { display: flex; align-items: start; gap: 7px; height: 60px; padding-top: 5px; }
.apps button { width: 48px; height: 48px; display: grid; place-items: center; border-radius: 6px; }
.apps svg { width: 30px; height: 30px; }
.apps .alert { background: #e9adaa; }
.apps .active { background: #ecf3d6; }
.search { width: 273px; height: 44px; margin: 5px 1px 0 0; display: flex; align-items: center; gap: 13px; padding: 0 12px 4px 14px; border: 1px solid #d6d9c4; border-radius: 22px; background: #f7fae9; }
.search input { flex: 1; min-width: 0; font-size: 16px; }
.search input::placeholder { color: #5f6358; opacity: 1; }
.apps .search-lens { width: 19px; height: 19px; }
.apps .rings { width: 48px; height: 30px; }
.tray { display: flex; justify-content: flex-end; gap: 10px; padding: 9px 24px 0 0; }
.tray > svg { width: 20px; height: 20px; margin-top: 10px; }
.lang { text-align: center; margin: 0 14px 0 13px; }
.tray .cloud { margin-left: 10px; }
.clock { text-align: right; margin-left: 14px; }
```
